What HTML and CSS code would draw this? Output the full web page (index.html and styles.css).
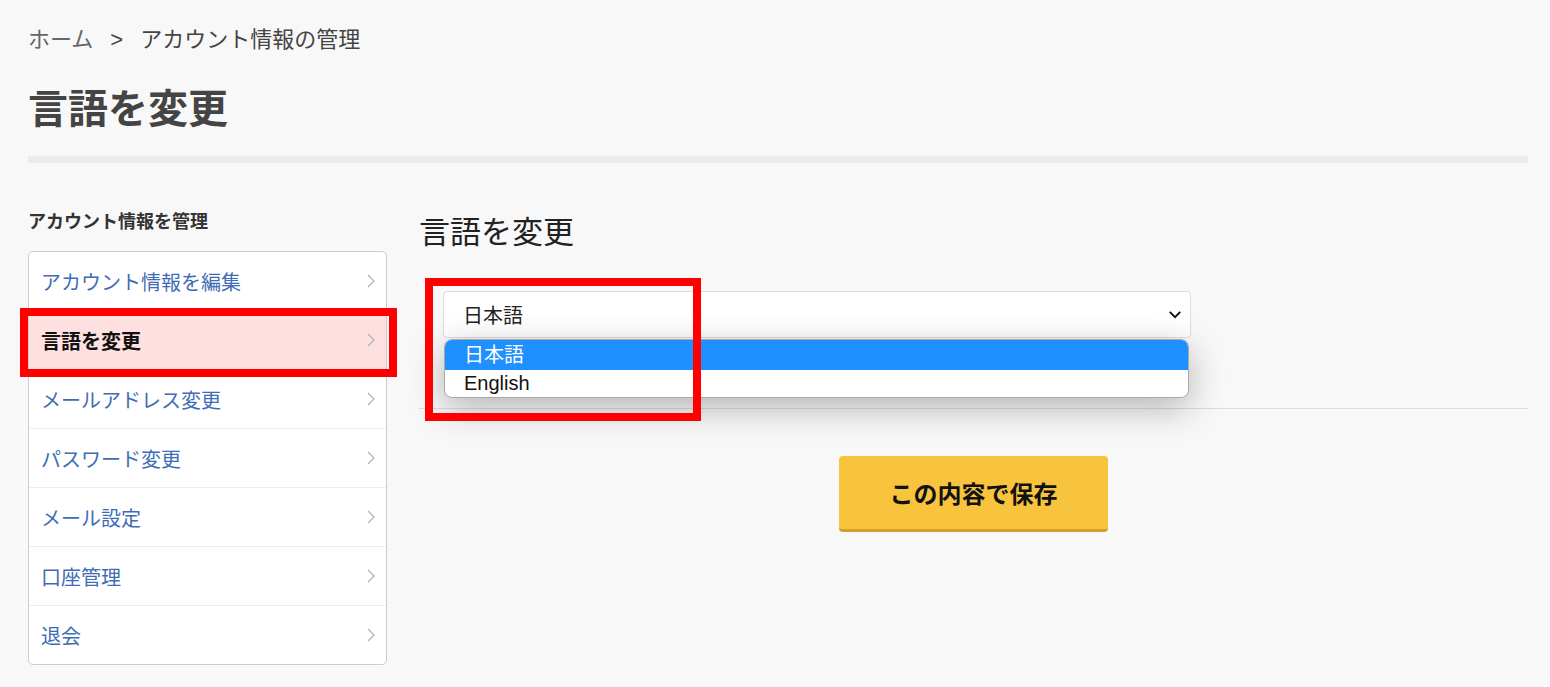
FILE: index.html
```html
<!DOCTYPE html>
<html lang="ja">
<head>
    <meta charset="UTF-8">
    <meta name="viewport" content="width=device-width, initial-scale=1.0">
    <title>言語を変更</title>
    <link rel="stylesheet" href="styles.css">
</head>
<body>
    <div class="page">
        <nav class="breadcrumb">
            <span class="crumb-home">ホーム</span>
            <span class="crumb-sep">&gt;</span>
            <span>アカウント情報の管理</span>
        </nav>

        <h1 class="page-title">言語を変更</h1>
        <div class="title-bar"></div>

        <div class="content">
            <aside class="sidebar">
                <div class="sidebar-title">アカウント情報を管理</div>
                <ul class="menu">
                    <li class="menu-item"><span>アカウント情報を編集</span><svg class="chev" viewBox="0 0 10 16"><polyline points="2,2 8,8 2,14"/></svg></li>
                    <li class="menu-item active"><span>言語を変更</span><svg class="chev" viewBox="0 0 10 16"><polyline points="2,2 8,8 2,14"/></svg></li>
                    <li class="menu-item"><span>メールアドレス変更</span><svg class="chev" viewBox="0 0 10 16"><polyline points="2,2 8,8 2,14"/></svg></li>
                    <li class="menu-item"><span>パスワード変更</span><svg class="chev" viewBox="0 0 10 16"><polyline points="2,2 8,8 2,14"/></svg></li>
                    <li class="menu-item"><span>メール設定</span><svg class="chev" viewBox="0 0 10 16"><polyline points="2,2 8,8 2,14"/></svg></li>
                    <li class="menu-item"><span>口座管理</span><svg class="chev" viewBox="0 0 10 16"><polyline points="2,2 8,8 2,14"/></svg></li>
                    <li class="menu-item"><span>退会</span><svg class="chev" viewBox="0 0 10 16"><polyline points="2,2 8,8 2,14"/></svg></li>
                </ul>
                <div class="mark mark-menu"></div>
            </aside>

            <main class="main">
                <h2 class="section-title">言語を変更</h2>
                <div class="form-row">
                    <div class="select-wrap">
                        <div class="select">
                            <span>日本語</span>
                            <svg class="select-arrow" viewBox="0 0 16 10"><polyline points="2,2 8,8 14,2"/></svg>
                        </div>
                        <ul class="options">
                            <li class="option selected">日本語</li>
                            <li class="option">English</li>
                        </ul>
                    </div>
                </div>
                <hr class="separator">
                <div class="actions">
                    <button class="save-btn">この内容で保存</button>
                </div>
                <div class="mark mark-select"></div>
            </main>
        </div>
    </div>
</body>
</html>
```

FILE: styles.css
```css
body {
    margin: 0;
    background-color: #f8f8f8;
    color: #333;
    font-family: "Liberation Sans", "Noto Sans CJK JP", sans-serif;
}
.page {
    padding: 26px 22px 0 28px;
}
.breadcrumb {
    font-size: 22px;
    line-height: 28px;
    color: #444;
    display: flex;
    gap: 17px;
}
.crumb-home {
    color: #666;
}
.page-title {
    font-size: 40px;
    font-weight: bold;
    color: #444;
    line-height: 52px;
    margin: 29px 0 0 0;
}
.title-bar {
    height: 7px;
    background-color: #ececec;
    margin-top: 21px;
}
.content {
    display: grid;
    grid-template-columns: 359px 1fr;
    gap: 32px;
    margin-top: 47px;
}
.sidebar {
    position: relative;
}
.sidebar-title {
    font-size: 18px;
    font-weight: bold;
    line-height: 24px;
    color: #333;
    margin-bottom: 17px;
}
.menu {
    list-style: none;
    margin: 0;
    padding: 0;
    background-color: #fff;
    border: 1px solid #ccc;
    border-radius: 5px;
    overflow: hidden;
}
.menu-item {
    height: 58px;
    display: flex;
    align-items: center;
    justify-content: space-between;
    padding: 0 10px 0 12px;
    font-size: 20px;
    color: #3f6db5;
    border-bottom: 1px solid #eee;
}
.menu-item:last-child {
    border-bottom: none;
}
.menu-item.active {
    background-color: #ffe0e0;
    color: #111;
    font-weight: bold;
}
.chev {
    width: 10px;
    height: 16px;
    fill: none;
    stroke: #b0b0b0;
    stroke-width: 1.2;
}
.main {
    position: relative;
}
.section-title {
    font-size: 31px;
    font-weight: normal;
    line-height: 40px;
    color: #222;
    margin: 3px 0 0 0;
}
.form-row {
    padding: 0 24px;
    margin-top: 38px;
}
.select-wrap {
    position: relative;
    width: 748px;
}
.select {
    height: 45px;
    background-color: #fff;
    border: 1px solid #ddd;
    border-radius: 4px;
    display: flex;
    align-items: center;
    justify-content: space-between;
    padding: 0 8px 0 19px;
    font-size: 20px;
    color: #222;
}
.select-arrow {
    width: 14px;
    height: 9px;
    fill: none;
    stroke: #111;
    stroke-width: 2.2;
}
.options {
    position: absolute;
    left: 1px;
    top: 48px;
    width: 743px;
    margin: 0;
    padding: 0;
    list-style: none;
    background-color: #fff;
    border: 1px solid #aaa;
    border-radius: 8px;
    overflow: hidden;
    box-shadow: 0 10px 36px rgba(0, 0, 0, 0.28);
    z-index: 2;
}
.option {
    font-size: 20px;
    line-height: 27px;
    padding: 0 19px;
    color: #111;
}
.option.selected {
    background-color: #1e90ff;
    color: #fff;
    line-height: 30px;
}
.separator {
    border: none;
    border-top: 1px solid #ddd;
    margin: 70px 0 0 0;
}
.actions {
    display: flex;
    justify-content: center;
    padding-top: 47px;
}
.save-btn {
    width: 269px;
    height: 76px;
    background-color: #f8c33d;
    border: none;
    border-bottom: 3px solid #d3a12a;
    border-radius: 4px;
    font-family: inherit;
    font-size: 24px;
    font-weight: bold;
    color: #111;
    cursor: pointer;
}
.mark {
    position: absolute;
    border: 8px solid #ff0000;
    box-sizing: border-box;
    z-index: 3;
}
.mark-menu {
    left: -8px;
    top: 98px;
    width: 377px;
    height: 69px;
}
.mark-select {
    left: 6px;
    top: 68px;
    width: 276px;
    height: 143px;
}
```
